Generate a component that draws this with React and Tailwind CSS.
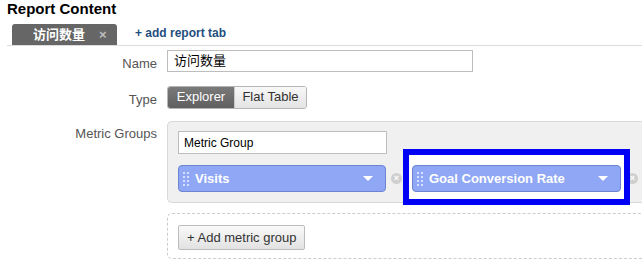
import React from 'react';

const font = { fontFamily: '"Liberation Sans", "Noto Sans CJK SC", Arial, sans-serif' };

function Grip() {
  return (
    <span className="grid grid-cols-2 gap-x-[2px] gap-y-[2px] mr-[6px]">
      {[0, 1, 2, 3, 4, 5, 6, 7].map((i) => (
        <span key={i} className="w-[2px] h-[2px] bg-[#d6e0ff]" />
      ))}
    </span>
  );
}

function Chip({ label, width }) {
  return (
    <div
      className={`relative z-10 flex items-center h-[27px] pl-[4px] pr-[12px] rounded-[4px] border border-[#6c84d2] bg-[#8fa7f4] ${width}`}
    >
      <Grip />
      <span className="text-[13px] font-bold text-white">{label}</span>
      <span className="ml-auto w-0 h-0 border-l-[5px] border-r-[5px] border-t-[5px] border-l-transparent border-r-transparent border-t-white" />
    </div>
  );
}

function Cancel() {
  return (
    <span className="flex items-center justify-center w-[11px] h-[11px] rounded-full bg-[#cfcfcf] text-white text-[9px] leading-none font-bold">
      ×
    </span>
  );
}

export default function App() {
  return (
    <div className="w-[642px] h-[265px] overflow-hidden bg-white" style={font}>
      <h1 className="pl-[7px] pt-[1px] text-[15px] leading-[16px] font-bold text-black">Report Content</h1>

      <div className="ml-[7px] mt-[7px] flex items-end border-b border-[#dcdcdc]">
        <div className="ml-[5px] flex items-center w-[105px] h-[21px] bg-[#666] rounded-t-[3px] pl-[21px]">
          <span className="text-[13px] font-bold text-white leading-none">访问数量</span>
          <span className="ml-[14px] text-[13px] font-bold text-[#bdbdbd] leading-none">×</span>
        </div>
        <span className="ml-[18px] mb-[3px] text-[12px] font-bold text-[#1f4f7e]">+ add report tab</span>
      </div>

      <div className="grid grid-cols-[157px_1fr] gap-x-[10px] mt-[4px]">
        <div className="text-right text-[13px] text-[#555] pt-[4px]">Name</div>
        <div className="w-[306px] h-[22px] border border-[#bdbdbd] flex items-center pl-[6px] text-[13px] text-black">
          访问数量
        </div>

        <div className="text-right text-[13px] text-[#555] pt-[16px]">Type</div>
        <div className="mt-[12px] flex h-[23px] w-[140px] rounded-[3px] border border-[#b5b5b5] overflow-hidden text-[13px]">
          <div className="w-[66px] flex items-center justify-center text-white bg-gradient-to-b from-[#7a7a7a] to-[#5f5f5f]">
            Explorer
          </div>
          <div className="flex-1 flex items-center justify-center text-[#333] bg-gradient-to-b from-[#f8f8f8] to-[#e3e3e3] border-l border-[#c8c8c8]">
            Flat Table
          </div>
        </div>

        <div className="text-right text-[13px] text-[#555] pt-[15px]">Metric Groups</div>
        <div className="mt-[12px] w-[520px] h-[82px] rounded-l-[5px] border border-r-0 border-[#d8d8d8] bg-[#f0f0f0] pl-[10px] pt-[9px]">
          <div className="w-[209px] h-[23px] bg-white border border-[#bdbdbd] flex items-center pl-[5px] text-[12px] text-black">
            Metric Group
          </div>
          <div className="mt-[11px] flex items-center">
            <Chip label="Visits" width="w-[208px]" />
            <span className="ml-[5px]"><Cancel /></span>
            <div className="relative ml-[10px]">
              <div className="absolute -left-[9px] -right-[9px] -top-[16px] -bottom-[13px] border-[6px] border-[#0000f5] bg-white" />
              <Chip label="Goal Conversion Rate" width="w-[209px]" />
            </div>
            <span className="ml-[6px]"><Cancel /></span>
          </div>
        </div>

        <div />
        <div className="mt-[10px] w-[520px] h-[46px] rounded-l-[5px] border border-r-0 border-dashed border-[#cccccc] pl-[10px] pt-[11px]">
          <div className="inline-flex items-center h-[25px] px-[8px] rounded-[2px] border border-[#bcbcbc] bg-gradient-to-b from-[#f9f9f9] to-[#e2e2e2] text-[13px] text-[#333]">
            + Add metric group
          </div>
        </div>
      </div>
    </div>
  );
}
